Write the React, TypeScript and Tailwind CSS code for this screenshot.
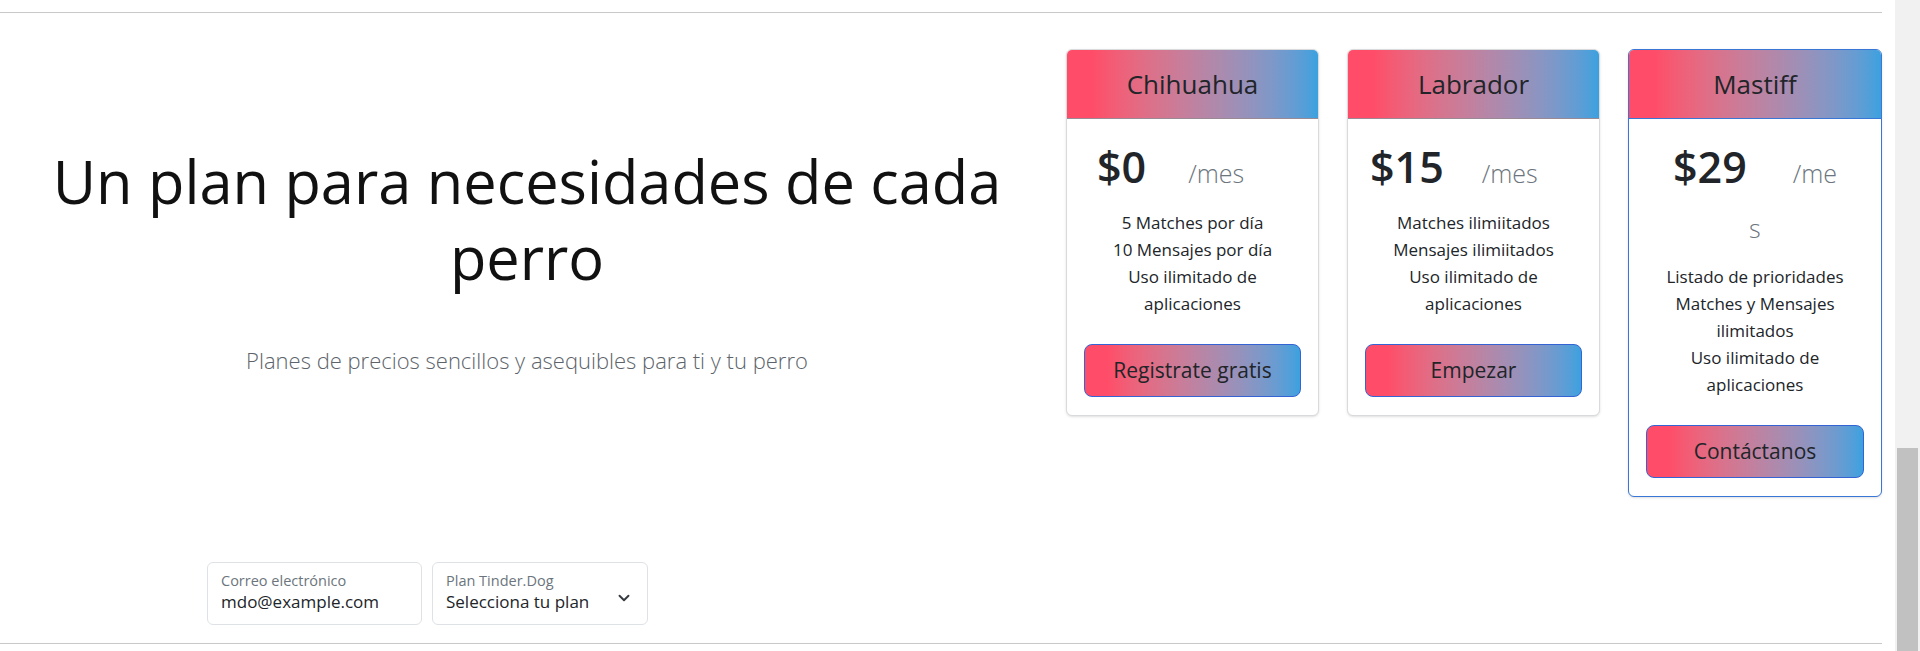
import { ChevronDown } from "lucide-react";

type Plan = {
  name: string;
  price: string;
  unit: string;
  tail?: string;
  padLeft: string;
  unitGap: string;
  features: string[];
  cta: string;
  featured?: boolean;
};

const PLANS: Plan[] = [
  {
    name: "Chihuahua",
    price: "$0",
    unit: "/mes",
    padLeft: "pl-[13px]",
    unitGap: "ml-[42px]",
    features: ["5 Matches por día", "10 Mensajes por día", "Uso ilimitado de", "aplicaciones"],
    cta: "Registrate gratis",
  },
  {
    name: "Labrador",
    price: "$15",
    unit: "/mes",
    padLeft: "pl-[5px]",
    unitGap: "ml-[38px]",
    features: ["Matches ilimiitados", "Mensajes ilimiitados", "Uso ilimitado de", "aplicaciones"],
    cta: "Empezar",
  },
  {
    name: "Mastiff",
    price: "$29",
    unit: "/me",
    tail: "s",
    padLeft: "pl-[27px]",
    unitGap: "ml-[46px]",
    features: ["Listado de prioridades", "Matches y Mensajes", "ilimitados", "Uso ilimitado de", "aplicaciones"],
    cta: "Contáctanos",
    featured: true,
  },
];

function PlanCard({ plan }: { plan: Plan }) {
  return (
    <div
      className={
        plan.featured
          ? "w-[254px] rounded-[6px] border border-[#3a76d6] bg-white shadow-sm overflow-hidden"
          : "w-[253px] rounded-[6px] border border-[#d9dadb] bg-white shadow-sm overflow-hidden"
      }
    >
      {/* Header */}
      <div
        className={
          plan.featured
            ? "h-[69px] flex items-center justify-center border-b border-[#3a76d6] bg-linear-to-r from-[#ff4c68] from-10% to-[#3aa1df]"
            : "h-[69px] flex items-center justify-center border-b border-[#9a8a96] bg-linear-to-r from-[#ff4c68] from-10% to-[#3aa1df]"
        }
      >
        <span className="text-[26px] text-[#212529]">{plan.name}</span>
      </div>

      {/* Body */}
      <div className="px-[17px] pt-[24px] pb-[18px]">
        <div className={`h-[48px] leading-[48px] text-[43px] font-semibold text-[#212529] whitespace-nowrap ${plan.padLeft}`}>
          <span>{plan.price}</span>
          <span className={`${plan.unitGap} text-[25px] font-light text-[#6c757d]`}>{plan.unit}</span>
        </div>
        {plan.tail && (
          <div className="h-[54px] leading-[74px] text-[25px] font-light text-[#6c757d] pl-[103px]">
            {plan.tail}
          </div>
        )}

        <ul className="mt-[18px] text-center text-[17px] leading-[27px] text-[#212529]">
          {plan.features.map((f) => (
            <li key={f}>{f}</li>
          ))}
        </ul>

        <button className="mt-[27px] w-full h-[53px] rounded-[8px] border border-[#3563d3] bg-linear-to-r from-[#ff4c68] from-10% to-[#3aa1df] text-[21px] text-[#212529]">
          {plan.cta}
        </button>
      </div>
    </div>
  );
}

export default function App() {
  return (
    <div className="flex h-[651px] w-full overflow-hidden bg-white font-['Open_Sans',sans-serif]">
      <div className="flex-1 flex flex-col pt-[12px]">
        <div className="h-px bg-[#c8c9ca] mr-[13px]" />

        <section className="mt-[36px] flex items-start">
          {/* Intro */}
          <div className="w-[1054px] shrink-0 pt-[94px] text-center">
            <h1 className="text-[59.5px] leading-[76px] font-normal text-[#111]">
              Un plan para necesidades de cada
              <br />
              perro
            </h1>
            <p className="mt-[50px] text-[22px] leading-[30px] font-light text-[#5c636a]">
              Planes de precios sencillos y asequibles para ti y tu perro
            </p>
          </div>

          {/* Pricing cards */}
          <div className="ml-[12px] flex items-start gap-[28px]">
            {PLANS.map((p) => (
              <PlanCard key={p.name} plan={p} />
            ))}
          </div>
        </section>

        {/* Sign-up form */}
        <form className="mt-[65px] pl-[207px] flex gap-[10px]">
          <div className="w-[215px] h-[63px] rounded-[6px] border border-[#dee2e6] px-[13px] pt-[9px]">
            <div className="text-[14.5px] leading-[18px] text-[#6c757d]">Correo electrónico</div>
            <div className="text-[17px] leading-[24px] text-[#212529]">mdo@example.com</div>
          </div>
          <div className="w-[216px] h-[63px] rounded-[6px] border border-[#dee2e6] px-[13px] pt-[9px] flex items-center justify-between">
            <div className="self-start">
              <div className="text-[14.5px] leading-[18px] text-[#6c757d]">Plan Tinder.Dog</div>
              <div className="text-[17px] leading-[24px] text-[#212529]">Selecciona tu plan</div>
            </div>
            <ChevronDown size={18} strokeWidth={2.5} className="text-[#343a40] mr-[1px]" />
          </div>
        </form>

        <div className="mt-[18px] h-px bg-[#c8c9ca] mr-[13px]" />
      </div>

      {/* Window scrollbar */}
      <div className="w-[25px] shrink-0 bg-[#f1f1f1] flex flex-col pt-[448px] px-[2px]">
        <div className="flex-1 bg-[#c1c1c1]" />
      </div>
    </div>
  );
}
